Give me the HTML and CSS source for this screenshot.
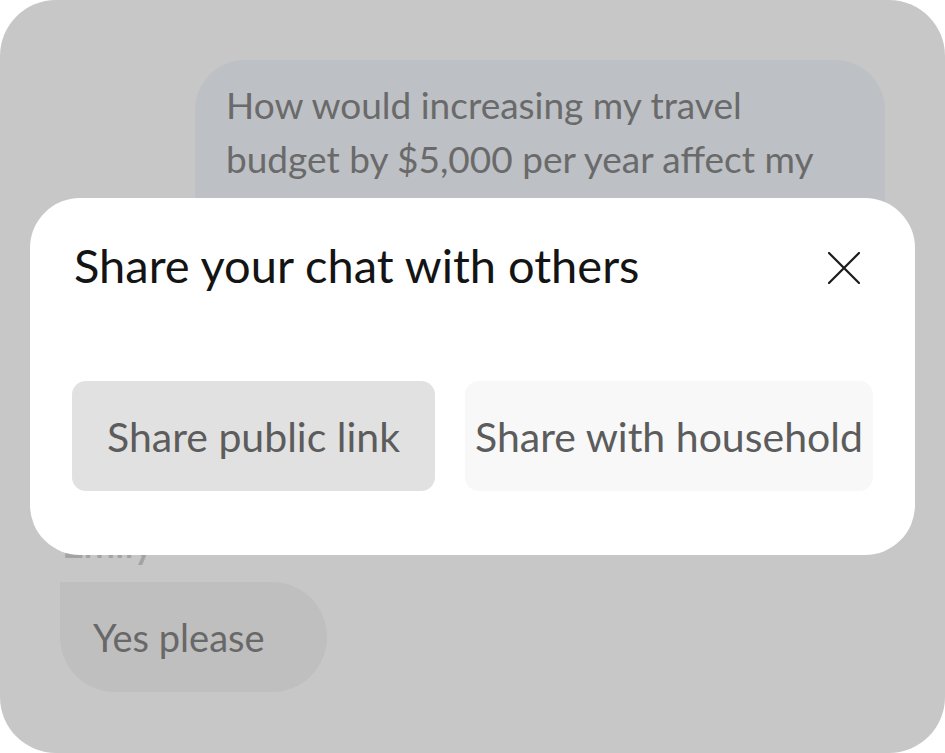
FILE: index.html
```html
<!DOCTYPE html>
<html>
<head>
<meta charset="utf-8">
<link rel="stylesheet" href="styles.css">
</head>
<body>
<div class="frame">
  <div class="msg-user">How would increasing my travel budget by $5,000 per year affect my retirement?</div>
  <div class="sender">Emily</div>
  <div class="msg-reply">Yes please</div>

  <div class="modal">
    <div class="modal-head">
      <h2 class="modal-title">Share your chat with others</h2>
      <svg class="close" width="32" height="32" viewBox="0 0 32 32" aria-label="Close">
        <path d="M1 1 L31 31 M31 1 L1 31" stroke="#1c1c1c" stroke-width="2.2" stroke-linecap="round" fill="none"/>
      </svg>
    </div>
    <div class="actions">
      <button class="btn btn-primary">Share public link</button>
      <button class="btn btn-secondary">Share with household</button>
    </div>
  </div>
</div>
</body>
</html>
```

FILE: styles.css
```css
* { box-sizing: border-box; }
html, body { margin: 0; padding: 0; background: #ffffff; }
body { font-family: Lato, "Noto Sans", sans-serif; }

.frame {
  width: 945px;
  height: 753px;
  border-radius: 56px;
  background: #c7c7c7;
  position: relative;
  overflow: hidden;
  padding: 60px 60px 0 60px;
  display: flex;
  flex-direction: column;
}

.frame > * { flex-shrink: 0; }

.msg-user {
  align-self: flex-end;
  width: 690px;
  background: #bdc0c4;
  border-radius: 50px 50px 0 50px;
  padding: 18px 31px;
  font-size: 37px;
  line-height: 54px;
  color: #6a6a6a;
}

.sender {
  margin-top: 265px;
  margin-left: 2px;
  font-size: 38px;
  line-height: 40px;
  color: #a3a3a3;
  font-weight: 600;
}

.msg-reply {
  margin-top: 19px;
  width: 267px;
  height: 110px;
  background: #bfbfbf;
  border-radius: 0 55px 55px 55px;
  padding-left: 33px;
  display: flex;
  align-items: center;
  font-size: 38px;
  color: #686868;
}

.modal {
  position: absolute;
  left: 30px;
  top: 198px;
  width: 885px;
  height: 357px;
  background: #ffffff;
  border-radius: 50px;
  padding-top: 40px;
}

.modal-head {
  height: 54px;
  display: flex;
  align-items: center;
  justify-content: space-between;
  padding: 0 55px 0 44px;
}

.modal-title {
  margin: 0;
  font-size: 47px;
  font-weight: 400;
  color: #141414;
  line-height: 54px;
  white-space: nowrap;
}

.close { display: block; margin-top: 6px; }

.actions {
  margin-top: 89px;
  display: grid;
  grid-template-columns: 363px 408px;
  column-gap: 30px;
  padding: 0 42px;
}

.btn {
  height: 110px;
  border: none;
  border-radius: 14px;
  font-family: inherit;
  font-size: 41px;
  color: #5c5c5c;
  padding: 0;
  white-space: nowrap;
  display: flex;
  align-items: center;
  justify-content: center;
}

.btn-primary { background: #e1e1e1; }
.btn-secondary { background: #f8f8f8; }
```
